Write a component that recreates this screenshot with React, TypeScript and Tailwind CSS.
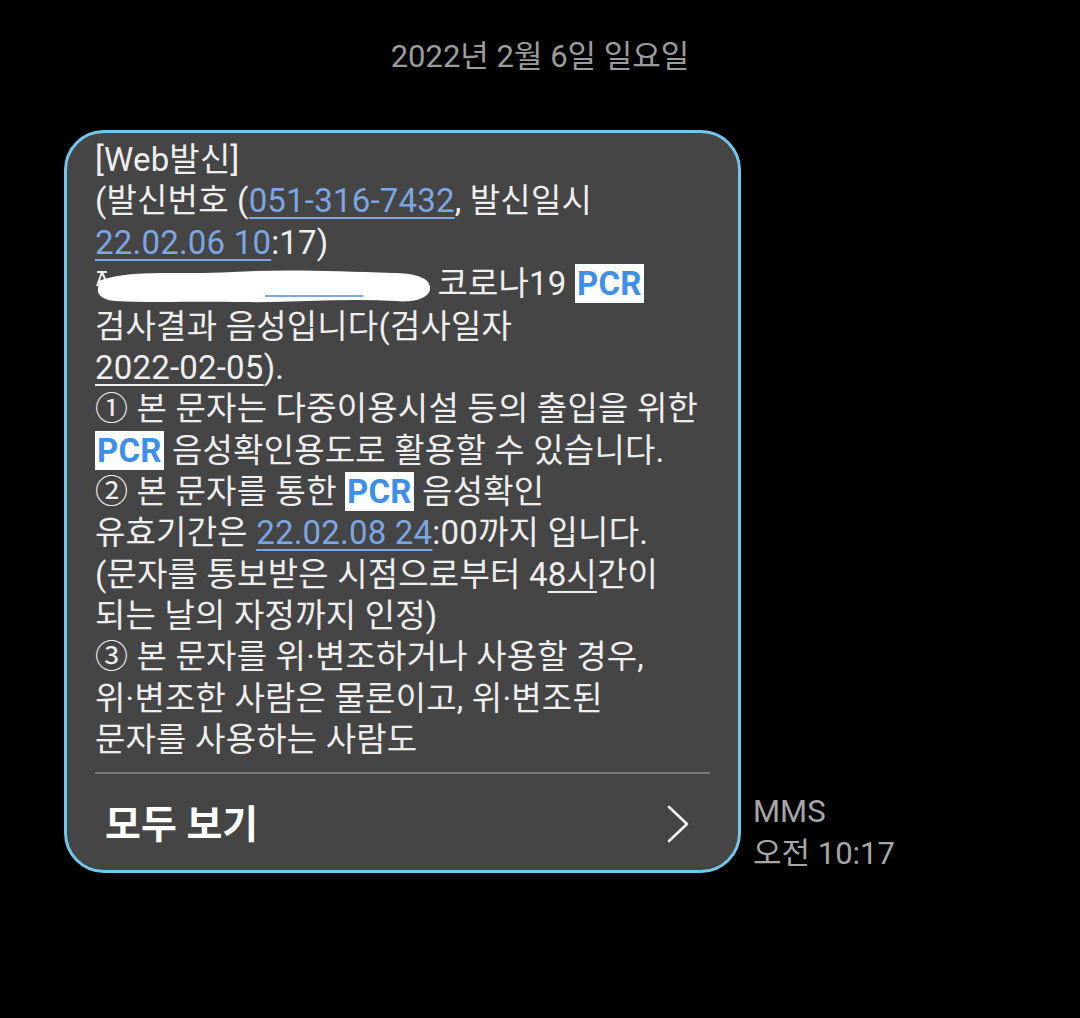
import React from 'react';

const font = { fontFamily: 'Roboto, "Noto Sans CJK KR", sans-serif' };

const Link: React.FC<{ children: React.ReactNode }> = ({ children }) => (
  <span className="text-[#7ea6e3] underline decoration-[2px] underline-offset-[5px]">{children}</span>
);

const Pcr = () => (
  <span className="bg-white px-[2px] font-bold text-[#3f8ee8]">PCR</span>
);

// scribbled-out sender name
const Redacted = () => (
  <svg width="340" height="42" viewBox="0 0 340 42" className="inline-block align-[-11px] -ml-[2px] -mr-[4px]">
    <path d="M4 8 L14 8 M9 8 L4 22 M9 8 L15 22" stroke="#eeeeee" strokeWidth="2" fill="none" />
    <path
      d="M8 16 C40 5 90 11 140 8 C190 5 240 7 300 9 C320 9 336 13 337 23 C338 33 324 39 302 37 C250 34 200 39 150 38 C100 37 60 39 22 37 C10 36 4 31 5 25 C6 19 4 18 8 16 Z"
      fill="#ffffff"
    />
    <path d="M172 32 L270 32" stroke="#7ea6e3" strokeWidth="2" />
  </svg>
);

const lines: React.ReactNode[] = [
  <>[Web발신]</>,
  <>(발신번호 (<Link>051-316-7432</Link>, 발신일시</>,
  <><Link>22.02.06 10</Link>:17)</>,
  <><Redacted /> 코로나19 <Pcr /></>,
  <>검사결과 음성입니다(검사일자</>,
  <><span className="underline decoration-[2px] underline-offset-[5px]">2022-02-05</span>).</>,
  <>① 본 문자는 다중이용시설 등의 출입을 위한</>,
  <><Pcr /> 음성확인용도로 활용할 수 있습니다.</>,
  <>② 본 문자를 통한 <Pcr /> 음성확인</>,
  <>유효기간은 <Link>22.02.08 24</Link>:00까지 입니다.</>,
  <>(문자를 통보받은 시점으로부터 4<span className="underline decoration-[2px] underline-offset-[5px]">8시</span>간이</>,
  <>되는 날의 자정까지 인정)</>,
  <>③ 본 문자를 위·변조하거나 사용할 경우,</>,
  <>위·변조한 사람은 물론이고, 위·변조된</>,
  <>문자를 사용하는 사람도</>,
];

export default function App() {
  return (
    <div className="min-h-[1018px] w-[1080px] bg-black" style={font}>
      <div className="pt-[37px] text-center text-[31px] leading-[40px] text-[#9c9c9c]">2022년 2월 6일 일요일</div>

      <div className="mt-[53px] flex items-end pl-[64px]">
        <div className="w-[677px] rounded-[40px] border-[3px] border-[#72c6ea] bg-[#454545] px-[28px] pt-[6px]">
          <div className="whitespace-nowrap text-[33px] leading-[41.3px] tracking-[0.2px] text-[#eeeeee]">
            {lines.map((l, i) => (
              <div key={i}>{l}</div>
            ))}
          </div>
          <div className="mt-[12px] h-[2px] bg-[#7a7a7a]" />
          <div className="flex h-[96px] items-center justify-between pl-[10px] pr-[20px]">
            <span className="pt-[6px] text-[39px] font-bold text-white">모두 보기</span>
            <svg width="24" height="38" viewBox="0 0 24 38" fill="none" className="mt-[4px]">
              <polyline points="3,2 21,19 3,36" stroke="#f2f2f2" strokeWidth="2.6" strokeLinecap="round" strokeLinejoin="round" />
            </svg>
          </div>
        </div>
        <div className="mb-[-2px] ml-[12px] text-[31px] leading-[42px] text-[#a6a6a6]">
          <div>MMS</div>
          <div>오전 10:17</div>
        </div>
      </div>
    </div>
  );
}
